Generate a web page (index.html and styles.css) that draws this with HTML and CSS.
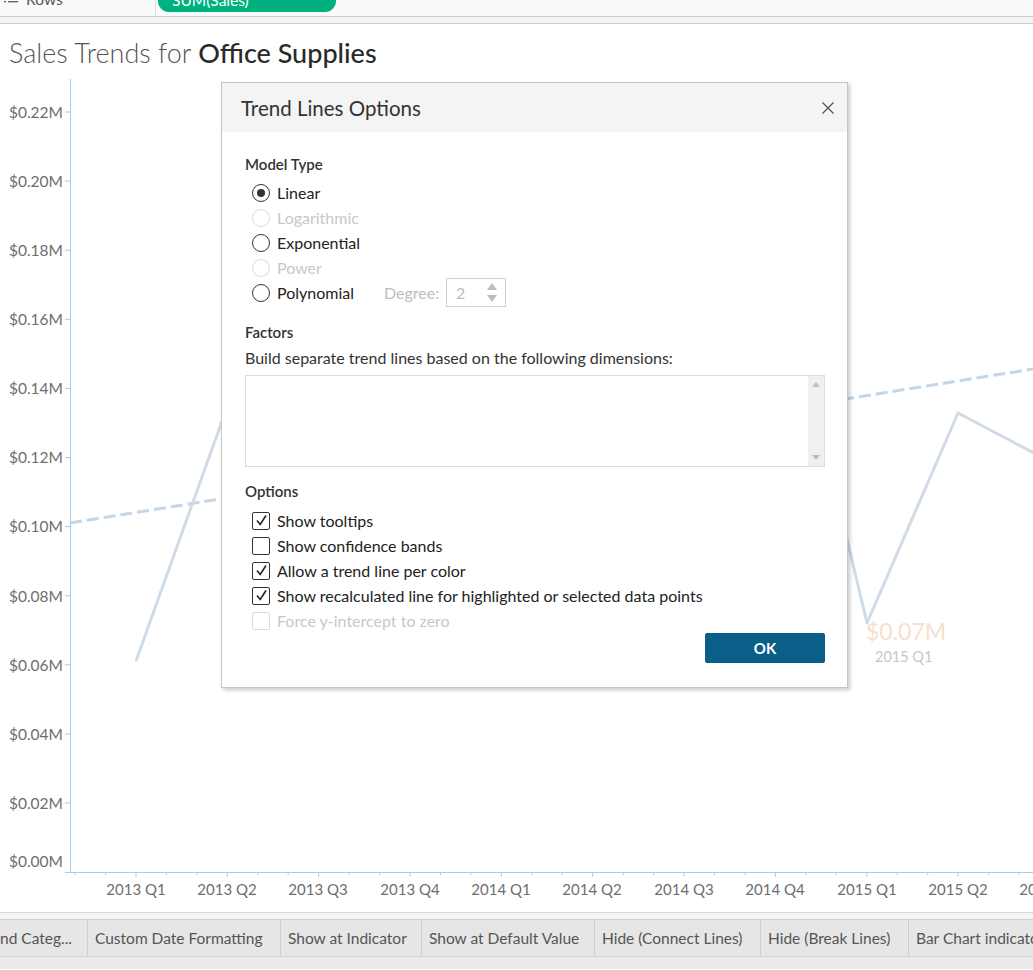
FILE: index.html
```html
<!DOCTYPE html>
<html>
<head>
<meta charset="utf-8">
<title>Sales Trends</title>
<link rel="stylesheet" href="styles.css">
</head>
<body>
<div class="page">
  <div class="shelf">
    <div class="shelf-name">
      <svg class="rows-icon" width="14" height="10" viewBox="0 0 14 10">
        <rect x="0" y="0" width="2" height="1.4" fill="#666"/>
        <rect x="4" y="0" width="10" height="1.4" fill="#666"/>
        <rect x="0" y="4" width="2" height="1.4" fill="#666"/>
        <rect x="4" y="4" width="10" height="1.4" fill="#666"/>
      </svg>
      <span class="shelf-label">Rows</span>
    </div>
    <div class="shelf-drop">
      <span class="pill">SUM(Sales)</span>
    </div>
  </div>
  <div class="shelf-band"></div>

  <div class="sheet">
    <h1 class="title"><span class="title-light">Sales Trends for </span><span class="title-strong">Office Supplies</span></h1>
    <div class="chart">
      <svg class="chart-svg" width="1033" height="834" viewBox="0 78 1033 834">
        <!-- trend line -->
        <line x1="70" y1="523" x2="1033" y2="369" class="trend"/>
        <!-- data line -->
        <polyline class="series" points="136,661 226,410 318,300 410,350 501,250 592,330 684,280 775,237 867,623 958,413 1049,461"/>
        <!-- mark label -->
        <text x="866" y="631" class="mark-value">$0.07M</text>
        <text x="875" y="656" class="mark-date">2015 Q1</text>

        <!-- y axis -->
        <line x1="70.5" y1="79" x2="70.5" y2="872" class="axis"/>
        <g class="axis">
          <line x1="65" y1="112" x2="70" y2="112"/>
          <line x1="65" y1="181.1" x2="70" y2="181.1"/>
          <line x1="65" y1="250.2" x2="70" y2="250.2"/>
          <line x1="65" y1="319.3" x2="70" y2="319.3"/>
          <line x1="65" y1="388.4" x2="70" y2="388.4"/>
          <line x1="65" y1="457.5" x2="70" y2="457.5"/>
          <line x1="65" y1="526.6" x2="70" y2="526.6"/>
          <line x1="65" y1="595.7" x2="70" y2="595.7"/>
          <line x1="65" y1="664.8" x2="70" y2="664.8"/>
          <line x1="65" y1="733.9" x2="70" y2="733.9"/>
          <line x1="65" y1="803" x2="70" y2="803"/>
        </g>
        <g class="ylabels">
          <text x="63" y="112">$0.22M</text>
          <text x="63" y="181">$0.20M</text>
          <text x="63" y="250">$0.18M</text>
          <text x="63" y="319">$0.16M</text>
          <text x="63" y="388">$0.14M</text>
          <text x="63" y="457">$0.12M</text>
          <text x="63" y="526">$0.10M</text>
          <text x="63" y="596">$0.08M</text>
          <text x="63" y="665">$0.06M</text>
          <text x="63" y="734">$0.04M</text>
          <text x="63" y="803">$0.02M</text>
          <text x="63" y="861">$0.00M</text>
        </g>

        <!-- x axis -->
        <line x1="65" y1="872.5" x2="1033" y2="872.5" class="axis"/>
        <g class="axis">
          <line x1="136" y1="872" x2="136" y2="877"/>
          <line x1="227.3" y1="872" x2="227.3" y2="877"/>
          <line x1="318.7" y1="872" x2="318.7" y2="877"/>
          <line x1="410" y1="872" x2="410" y2="877"/>
          <line x1="501.4" y1="872" x2="501.4" y2="877"/>
          <line x1="592.7" y1="872" x2="592.7" y2="877"/>
          <line x1="684.1" y1="872" x2="684.1" y2="877"/>
          <line x1="775.4" y1="872" x2="775.4" y2="877"/>
          <line x1="866.8" y1="872" x2="866.8" y2="877"/>
          <line x1="958.1" y1="872" x2="958.1" y2="877"/>
        </g>
        <g class="axis">
          <line x1="75.1" y1="872" x2="75.1" y2="875"/>
          <line x1="105.6" y1="872" x2="105.6" y2="875"/>
          <line x1="166.4" y1="872" x2="166.4" y2="875"/>
          <line x1="196.9" y1="872" x2="196.9" y2="875"/>
          <line x1="257.8" y1="872" x2="257.8" y2="875"/>
          <line x1="288.2" y1="872" x2="288.2" y2="875"/>
          <line x1="349.1" y1="872" x2="349.1" y2="875"/>
          <line x1="379.6" y1="872" x2="379.6" y2="875"/>
          <line x1="440.5" y1="872" x2="440.5" y2="875"/>
          <line x1="470.9" y1="872" x2="470.9" y2="875"/>
          <line x1="531.8" y1="872" x2="531.8" y2="875"/>
          <line x1="562.3" y1="872" x2="562.3" y2="875"/>
          <line x1="623.2" y1="872" x2="623.2" y2="875"/>
          <line x1="653.6" y1="872" x2="653.6" y2="875"/>
          <line x1="714.5" y1="872" x2="714.5" y2="875"/>
          <line x1="745" y1="872" x2="745" y2="875"/>
          <line x1="805.9" y1="872" x2="805.9" y2="875"/>
          <line x1="836.3" y1="872" x2="836.3" y2="875"/>
          <line x1="897.2" y1="872" x2="897.2" y2="875"/>
          <line x1="927.7" y1="872" x2="927.7" y2="875"/>
          <line x1="988.6" y1="872" x2="988.6" y2="875"/>
          <line x1="1019" y1="872" x2="1019" y2="875"/>
        </g>
        <g class="xlabels">
          <text x="136" y="889">2013 Q1</text>
          <text x="227" y="889">2013 Q2</text>
          <text x="318" y="889">2013 Q3</text>
          <text x="410" y="889">2013 Q4</text>
          <text x="501" y="889">2014 Q1</text>
          <text x="592" y="889">2014 Q2</text>
          <text x="684" y="889">2014 Q3</text>
          <text x="775" y="889">2014 Q4</text>
          <text x="867" y="889">2015 Q1</text>
          <text x="958" y="889">2015 Q2</text>
          <text x="1049" y="889">2015 Q3</text>
        </g>
      </svg>
    </div>
  </div>

  <div class="tabbar">
    <div class="tabs">
      <div class="tab tab-first">nd Categ...</div>
      <div class="tab tab-2">Custom Date Formatting</div>
      <div class="tab tab-3">Show at Indicator</div>
      <div class="tab tab-4">Show at Default Value</div>
      <div class="tab tab-5">Hide (Connect Lines)</div>
      <div class="tab tab-6">Hide (Break Lines)</div>
      <div class="tab tab-7">Bar Chart indicator</div>
    </div>
  </div>

  <div class="dialog">
    <div class="dialog-header">
      <span class="dialog-title">Trend Lines Options</span>
      <svg class="close" width="12" height="12" viewBox="0 0 12 12">
        <path d="M0.5 0.5 L11.5 11.5 M11.5 0.5 L0.5 11.5" stroke="#555" stroke-width="1.3" fill="none"/>
      </svg>
    </div>
    <div class="dialog-body">
      <div class="section-label">Model Type</div>
      <div class="radio-list">
        <div class="radio-row"><span class="radio checked"></span><span class="opt">Linear</span></div>
        <div class="radio-row disabled"><span class="radio"></span><span class="opt">Logarithmic</span></div>
        <div class="radio-row"><span class="radio"></span><span class="opt">Exponential</span></div>
        <div class="radio-row disabled"><span class="radio"></span><span class="opt">Power</span></div>
        <div class="radio-row">
          <span class="radio"></span><span class="opt opt-poly">Polynomial</span>
          <span class="degree-label">Degree:</span>
          <span class="spinner">
            <span class="spinner-value">2</span>
            <span class="spinner-arrows">
              <svg width="10" height="7" viewBox="0 0 10 7"><path d="M0 7 L5 0 L10 7 Z" fill="#bdbdbd"/></svg>
              <svg width="10" height="7" viewBox="0 0 10 7"><path d="M0 0 L10 0 L5 7 Z" fill="#bdbdbd"/></svg>
            </span>
          </span>
        </div>
      </div>

      <div class="section-label section-factors">Factors</div>
      <div class="desc">Build separate trend lines based on the following dimensions:</div>
      <div class="listbox">
        <div class="scrollbar">
          <svg width="8" height="5" viewBox="0 0 8 5"><path d="M0 5 L4 0 L8 5 Z" fill="#bcbcbc"/></svg>
          <svg width="8" height="5" viewBox="0 0 8 5"><path d="M0 0 L8 0 L4 5 Z" fill="#bcbcbc"/></svg>
        </div>
      </div>

      <div class="section-label section-options">Options</div>
      <div class="check-list">
        <div class="check-row"><span class="checkbox checked"><svg width="15" height="15" viewBox="0 0 15 15"><path d="M3 7.5 L6.2 11.5 L12 2.5" stroke="#222" stroke-width="1.6" fill="none"/></svg></span><span class="opt">Show tooltips</span></div>
        <div class="check-row"><span class="checkbox"></span><span class="opt">Show confidence bands</span></div>
        <div class="check-row"><span class="checkbox checked"><svg width="15" height="15" viewBox="0 0 15 15"><path d="M3 7.5 L6.2 11.5 L12 2.5" stroke="#222" stroke-width="1.6" fill="none"/></svg></span><span class="opt">Allow a trend line per color</span></div>
        <div class="check-row"><span class="checkbox checked"><svg width="15" height="15" viewBox="0 0 15 15"><path d="M3 7.5 L6.2 11.5 L12 2.5" stroke="#222" stroke-width="1.6" fill="none"/></svg></span><span class="opt">Show recalculated line for highlighted or selected data points</span></div>
        <div class="check-row disabled"><span class="checkbox"></span><span class="opt">Force y-intercept to zero</span></div>
      </div>
      <div class="button-row">
        <button class="ok">OK</button>
      </div>
    </div>
  </div>
</div>
</body>
</html>
```

FILE: styles.css
```css
html, body {
  margin: 0;
  padding: 0;
  background: #fff;
}

body {
  font-family: "Lato", "Noto Sans", sans-serif;
  color: #333;
}

.page {
  position: relative;
  width: 1033px;
  height: 970px;
  overflow: hidden;
}

/* Shelf */
.shelf {
  height: 16px;
  background: #fafafa;
  border-bottom: 1px solid #cdcdcd;
  display: flex;
  overflow: hidden;
}

.shelf-name {
  width: 156px;
  border-right: 1px solid #dedede;
  display: flex;
  align-items: flex-end;
  box-sizing: border-box;
  padding-left: 4px;
}

.rows-icon {
  margin-bottom: 9px;
  margin-right: 8px;
}

.shelf-label {
  font-size: 15.5px;
  color: #555;
  line-height: 15px;
  margin-bottom: 9px;
}

.shelf-drop {
  flex: 1;
  display: flex;
  align-items: flex-end;
  padding-left: 2px;
}

.pill {
  width: 178px;
  height: 26px;
  margin-bottom: 4px;
  background: #00b180;
  border-radius: 0 0 11px 11px;
  color: #fff;
  font-size: 15.5px;
  box-sizing: border-box;
  padding-left: 14px;
  display: flex;
  align-items: flex-end;
  line-height: 15px;
  padding-bottom: 4px;
}

.shelf-band {
  height: 6px;
  background: #f3f3f3;
  border-bottom: 1px solid #cdcdcd;
}

/* Sheet */
.sheet {
  height: 888px;
  display: flex;
  flex-direction: column;
}

.title {
  margin: 0;
  height: 54px;
  box-sizing: border-box;
  padding: 3px 0 0 9px;
  display: flex;
  align-items: center;
  font-size: 27px;
  font-weight: normal;
  white-space: pre;
}

.title-light {
  color: #555;
  font-weight: 300;
}

.title-strong {
  color: #2a2a2a;
  font-weight: 500;
}

.chart {
  height: 834px;
}

.chart-svg {
  display: block;
}

.trend {
  stroke: #c4d5e7;
  stroke-width: 3;
  stroke-dasharray: 12 5;
  fill: none;
}

.series {
  stroke: #d0dbe6;
  stroke-width: 3;
  fill: none;
  stroke-linejoin: round;
}

.axis {
  stroke: #a4cfec;
  stroke-width: 1;
}

.ylabels text {
  font-family: "Lato", sans-serif;
  font-size: 15.5px;
  fill: #6e6e6e;
  text-anchor: end;
  dominant-baseline: central;
}

.xlabels text {
  font-family: "Lato", sans-serif;
  font-size: 15px;
  fill: #6e6e6e;
  text-anchor: middle;
  dominant-baseline: central;
}

.mark-value {
  font-family: "Lato", sans-serif;
  font-size: 23px;
  fill: #f7e0cb;
  dominant-baseline: central;
}

.mark-date {
  font-family: "Lato", sans-serif;
  font-size: 14.5px;
  fill: #c6c6c6;
  dominant-baseline: central;
}

/* Tab bar */
.tabbar {
  height: 57px;
  border-top: 1px solid #d9d9d9;
  background: #ebebeb;
  box-sizing: border-box;
}

.tabs {
  margin-top: 6px;
  height: 38px;
  box-sizing: border-box;
  border-top: 1px solid #cfcfcf;
  border-bottom: 1px solid #cfcfcf;
  background: #e6e6e6;
  display: flex;
  box-shadow: 0 -6px 0 #f5f5f5;
}

.tab {
  box-sizing: border-box;
  border-right: 1px solid #cfcfcf;
  padding-left: 7px;
  font-size: 15.5px;
  color: #555;
  display: flex;
  align-items: center;
  white-space: nowrap;
  overflow: hidden;
  flex-shrink: 0;
}

.tab-first { width: 88px; padding-left: 0; }
.tab-2 { width: 193px; }
.tab-3 { width: 141px; }
.tab-4 { width: 173px; }
.tab-5 { width: 166px; }
.tab-6 { width: 148px; }
.tab-7 { width: 140px; border-right: none; }

/* Dialog */
.dialog {
  position: absolute;
  left: 221px;
  top: 82px;
  width: 627px;
  box-sizing: border-box;
  border: 1px solid #c6c6c6;
  background: #fff;
  box-shadow: 2px 2px 4px rgba(0, 0, 0, 0.22);
}

.dialog-header {
  height: 49px;
  background: #f4f4f4;
  display: flex;
  align-items: center;
  justify-content: space-between;
  padding: 0 13px 0 19px;
}

.dialog-title {
  font-size: 20.5px;
  color: #333;
}

.dialog-body {
  padding: 20px 22px 24px 23px;
  font-size: 16px;
}

.section-label {
  height: 25px;
  line-height: 25px;
  font-size: 15px;
  font-weight: 600;
  color: #333;
}

.radio-list {
  margin-top: 3px;
}

.radio-row,
.check-row {
  height: 25px;
  display: flex;
  align-items: center;
  padding-left: 7px;
  color: #222;
}

.radio-row .opt,
.check-row .opt {
  margin-left: 7px;
}

.radio {
  width: 18px;
  height: 18px;
  box-sizing: border-box;
  border: 1.5px solid #333;
  border-radius: 50%;
  display: flex;
  align-items: center;
  justify-content: center;
  flex-shrink: 0;
}

.radio.checked::after {
  content: "";
  width: 8px;
  height: 8px;
  border-radius: 50%;
  background: #333;
}

.disabled {
  color: #c8c8c8;
}

.disabled .radio,
.disabled .checkbox {
  border-color: #dadada;
}

.opt-poly {
  width: 107px;
  flex-shrink: 0;
}

.degree-label {
  color: #bdbdbd;
}

.spinner {
  margin-left: auto;
  margin-right: 319px;
  width: 60px;
  height: 29px;
  box-sizing: border-box;
  border: 1px solid #d0d0d0;
  display: flex;
  align-items: center;
  justify-content: space-between;
  padding: 0 8px 0 9px;
  color: #bdbdbd;
}

.spinner-arrows {
  display: flex;
  flex-direction: column;
  gap: 5px;
}

.spinner-arrows svg {
  display: block;
}

.section-factors {
  margin-top: 15px;
}

.desc {
  height: 25px;
  line-height: 25px;
  color: #333;
}

.listbox {
  margin-top: 5px;
  height: 92px;
  box-sizing: border-box;
  border: 1px solid #dcdcdc;
  display: flex;
  justify-content: flex-end;
}

.scrollbar {
  width: 16px;
  background: #f0f0f0;
  display: flex;
  flex-direction: column;
  justify-content: space-between;
  align-items: center;
  padding: 6px 0;
}

.scrollbar svg {
  display: block;
}

.section-options {
  margin-top: 12px;
}

.check-list {
  margin-top: 4px;
}

.checkbox {
  width: 18px;
  height: 18px;
  box-sizing: border-box;
  border: 1px solid #333;
  border-radius: 2px;
  display: flex;
  align-items: center;
  justify-content: center;
  flex-shrink: 0;
}

.checkbox svg {
  display: block;
}

.button-row {
  display: flex;
  justify-content: flex-end;
}

.ok {
  width: 120px;
  height: 30px;
  border: none;
  border-radius: 2px;
  background: #0a5f89;
  color: #fff;
  font-family: "Lato", sans-serif;
  font-weight: 700;
  font-size: 15px;
  padding: 0;
}
```
